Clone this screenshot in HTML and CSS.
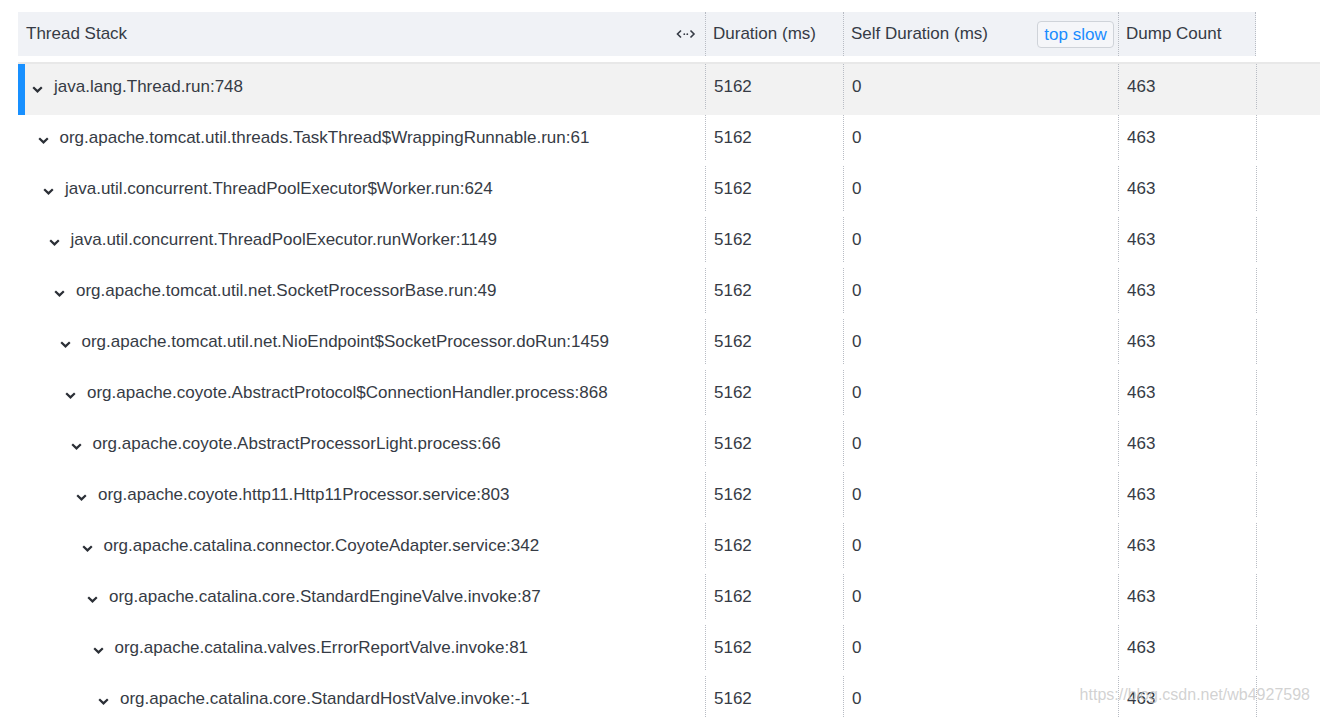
FILE: index.html
```html
<!DOCTYPE html>
<html>
<head>
<meta charset="utf-8">
<link rel="stylesheet" href="styles.css">
</head>
<body>
<div class="table">
  <div class="thead">
    <div class="th c1"><span>Thread Stack</span>
      <svg class="resize" width="20" height="10" viewBox="0 0 20 10"><polyline points="5,1.5 1.5,5 5,8.5" fill="none" stroke="#363b45" stroke-width="1.6"/><circle cx="8.3" cy="5.2" r="0.9" fill="#363b45"/><circle cx="11.3" cy="5.2" r="0.9" fill="#363b45"/><polyline points="14.5,1.5 18,5 14.5,8.5" fill="none" stroke="#363b45" stroke-width="1.6"/></svg>
    </div>
    <div class="th c2">Duration (ms)</div>
    <div class="th c3"><span>Self Duration (ms)</span><button class="topslow">top slow</button></div>
    <div class="th c4">Dump Count</div>
  </div>
  <div class="tbody">
    <div class="row active"><div class="td c1" style="--d:0"><svg class="chev" width="11" height="7" viewBox="0 0 11 7"><polyline points="1.2,1.2 5.5,5.4 9.8,1.2" fill="none" stroke="#2b2f36" stroke-width="2.2"/></svg>java.lang.Thread.run:748</div><div class="td c2">5162</div><div class="td c3">0</div><div class="td c4">463</div><div class="td c5"></div></div>
    <div class="row"><div class="td c1" style="--d:1"><svg class="chev" width="11" height="7" viewBox="0 0 11 7"><polyline points="1.2,1.2 5.5,5.4 9.8,1.2" fill="none" stroke="#2b2f36" stroke-width="2.2"/></svg>org.apache.tomcat.util.threads.TaskThread$WrappingRunnable.run:61</div><div class="td c2">5162</div><div class="td c3">0</div><div class="td c4">463</div><div class="td c5"></div></div>
    <div class="row"><div class="td c1" style="--d:2"><svg class="chev" width="11" height="7" viewBox="0 0 11 7"><polyline points="1.2,1.2 5.5,5.4 9.8,1.2" fill="none" stroke="#2b2f36" stroke-width="2.2"/></svg>java.util.concurrent.ThreadPoolExecutor$Worker.run:624</div><div class="td c2">5162</div><div class="td c3">0</div><div class="td c4">463</div><div class="td c5"></div></div>
    <div class="row"><div class="td c1" style="--d:3"><svg class="chev" width="11" height="7" viewBox="0 0 11 7"><polyline points="1.2,1.2 5.5,5.4 9.8,1.2" fill="none" stroke="#2b2f36" stroke-width="2.2"/></svg>java.util.concurrent.ThreadPoolExecutor.runWorker:1149</div><div class="td c2">5162</div><div class="td c3">0</div><div class="td c4">463</div><div class="td c5"></div></div>
    <div class="row"><div class="td c1" style="--d:4"><svg class="chev" width="11" height="7" viewBox="0 0 11 7"><polyline points="1.2,1.2 5.5,5.4 9.8,1.2" fill="none" stroke="#2b2f36" stroke-width="2.2"/></svg>org.apache.tomcat.util.net.SocketProcessorBase.run:49</div><div class="td c2">5162</div><div class="td c3">0</div><div class="td c4">463</div><div class="td c5"></div></div>
    <div class="row"><div class="td c1" style="--d:5"><svg class="chev" width="11" height="7" viewBox="0 0 11 7"><polyline points="1.2,1.2 5.5,5.4 9.8,1.2" fill="none" stroke="#2b2f36" stroke-width="2.2"/></svg>org.apache.tomcat.util.net.NioEndpoint$SocketProcessor.doRun:1459</div><div class="td c2">5162</div><div class="td c3">0</div><div class="td c4">463</div><div class="td c5"></div></div>
    <div class="row"><div class="td c1" style="--d:6"><svg class="chev" width="11" height="7" viewBox="0 0 11 7"><polyline points="1.2,1.2 5.5,5.4 9.8,1.2" fill="none" stroke="#2b2f36" stroke-width="2.2"/></svg>org.apache.coyote.AbstractProtocol$ConnectionHandler.process:868</div><div class="td c2">5162</div><div class="td c3">0</div><div class="td c4">463</div><div class="td c5"></div></div>
    <div class="row"><div class="td c1" style="--d:7"><svg class="chev" width="11" height="7" viewBox="0 0 11 7"><polyline points="1.2,1.2 5.5,5.4 9.8,1.2" fill="none" stroke="#2b2f36" stroke-width="2.2"/></svg>org.apache.coyote.AbstractProcessorLight.process:66</div><div class="td c2">5162</div><div class="td c3">0</div><div class="td c4">463</div><div class="td c5"></div></div>
    <div class="row"><div class="td c1" style="--d:8"><svg class="chev" width="11" height="7" viewBox="0 0 11 7"><polyline points="1.2,1.2 5.5,5.4 9.8,1.2" fill="none" stroke="#2b2f36" stroke-width="2.2"/></svg>org.apache.coyote.http11.Http11Processor.service:803</div><div class="td c2">5162</div><div class="td c3">0</div><div class="td c4">463</div><div class="td c5"></div></div>
    <div class="row"><div class="td c1" style="--d:9"><svg class="chev" width="11" height="7" viewBox="0 0 11 7"><polyline points="1.2,1.2 5.5,5.4 9.8,1.2" fill="none" stroke="#2b2f36" stroke-width="2.2"/></svg>org.apache.catalina.connector.CoyoteAdapter.service:342</div><div class="td c2">5162</div><div class="td c3">0</div><div class="td c4">463</div><div class="td c5"></div></div>
    <div class="row"><div class="td c1" style="--d:10"><svg class="chev" width="11" height="7" viewBox="0 0 11 7"><polyline points="1.2,1.2 5.5,5.4 9.8,1.2" fill="none" stroke="#2b2f36" stroke-width="2.2"/></svg>org.apache.catalina.core.StandardEngineValve.invoke:87</div><div class="td c2">5162</div><div class="td c3">0</div><div class="td c4">463</div><div class="td c5"></div></div>
    <div class="row"><div class="td c1" style="--d:11"><svg class="chev" width="11" height="7" viewBox="0 0 11 7"><polyline points="1.2,1.2 5.5,5.4 9.8,1.2" fill="none" stroke="#2b2f36" stroke-width="2.2"/></svg>org.apache.catalina.valves.ErrorReportValve.invoke:81</div><div class="td c2">5162</div><div class="td c3">0</div><div class="td c4">463</div><div class="td c5"></div></div>
    <div class="row"><div class="td c1" style="--d:12"><svg class="chev" width="11" height="7" viewBox="0 0 11 7"><polyline points="1.2,1.2 5.5,5.4 9.8,1.2" fill="none" stroke="#2b2f36" stroke-width="2.2"/></svg>org.apache.catalina.core.StandardHostValve.invoke:-1</div><div class="td c2">5162</div><div class="td c3">0</div><div class="td c4">463</div><div class="td c5"></div></div>
  </div>
</div>
<div class="watermark">https://blog.csdn.net/wb4927598</div>
</body>
</html>
```

FILE: styles.css
```css
html, body {
  margin: 0;
  padding: 0;
  overflow: hidden;
  background: #ffffff;
}
body {
  font-family: "Liberation Sans", Arial, sans-serif;
  font-size: 17px;
  color: #363b45;
  width: 1320px;
  height: 718px;
  position: relative;
}
.table {
  margin: 12px 0 0 18px;
  width: 1302px;
}
.thead {
  display: flex;
  height: 44px;
  width: 1238px;
  background: #f0f2f6;
  margin-bottom: 6px;
}
.th {
  display: flex;
  align-items: center;
  box-sizing: border-box;
  padding-left: 7px;
}
.c1 { width: 687px; flex: none; }
.c2 { width: 138px; flex: none; }
.c3 { width: 275px; flex: none; }
.c4 { width: 138px; flex: none; }
.c5 { flex: 1; }
.th.c1 {
  justify-content: space-between;
  padding-left: 8px;
  padding-right: 9px;
}
.th.c2, .th.c3, .th.c4 { border-left: 1px dotted #b8bcc4; }
.th.c4 { border-right: 1px dotted #b8bcc4; }
.th.c3 {
  justify-content: space-between;
  padding-right: 4px;
}
.resize { display: block; }
.topslow {
  font-family: inherit;
  font-size: 17px;
  color: #1a8cff;
  background: #f5f6f9;
  border: 1px solid #cfd3d9;
  border-radius: 4px;
  height: 27px;
  width: 77px;
  padding: 0;
  line-height: 25px;
}
.tbody {
  border-top: 2px solid #e8e8e8;
}
.row {
  display: flex;
  padding-bottom: 6px;
}
.row.active {
  background: #f2f2f2;
  box-shadow: inset 7px 0 0 #1890ff;
}
.td {
  height: 45px;
  box-sizing: border-box;
  display: flex;
  align-items: center;
  padding-left: 8px;
  white-space: nowrap;
}
.td.c2, .td.c3, .td.c4, .td.c5 { border-left: 1px dotted #b8bcc4; }
.td.c1 {
  padding-left: calc(14px + var(--d) * 5.5px);
}
.chev {
  display: block;
  margin: 6px 11px 0 0;
  flex: none;
}
.watermark {
  position: absolute;
  right: 10px;
  top: 686px;
  font-size: 16px;
  color: rgba(190, 190, 190, 0.7);
  white-space: nowrap;
}
```
